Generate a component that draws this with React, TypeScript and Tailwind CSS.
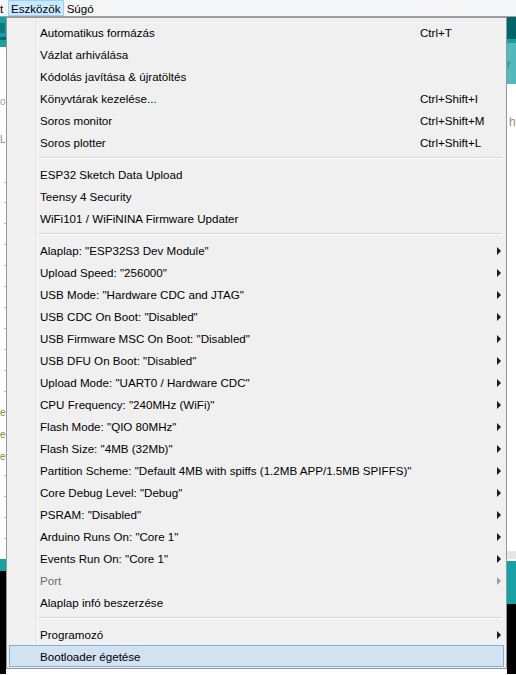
import React from 'react'

type Entry =
  | { kind: 'item'; label: string; shortcut?: string; sub?: boolean; disabled?: boolean; active?: boolean }
  | { kind: 'sep' }

const entries: Entry[] = [
  { kind: 'item', label: 'Automatikus formázás', shortcut: 'Ctrl+T' },
  { kind: 'item', label: 'Vázlat arhiválása' },
  { kind: 'item', label: 'Kódolás javítása & újratöltés' },
  { kind: 'item', label: 'Könyvtárak kezelése...', shortcut: 'Ctrl+Shift+I' },
  { kind: 'item', label: 'Soros monitor', shortcut: 'Ctrl+Shift+M' },
  { kind: 'item', label: 'Soros plotter', shortcut: 'Ctrl+Shift+L' },
  { kind: 'sep' },
  { kind: 'item', label: 'ESP32 Sketch Data Upload' },
  { kind: 'item', label: 'Teensy 4 Security' },
  { kind: 'item', label: 'WiFi101 / WiFiNINA Firmware Updater' },
  { kind: 'sep' },
  { kind: 'item', label: 'Alaplap: "ESP32S3 Dev Module"', sub: true },
  { kind: 'item', label: 'Upload Speed: "256000"', sub: true },
  { kind: 'item', label: 'USB Mode: "Hardware CDC and JTAG"', sub: true },
  { kind: 'item', label: 'USB CDC On Boot: "Disabled"', sub: true },
  { kind: 'item', label: 'USB Firmware MSC On Boot: "Disabled"', sub: true },
  { kind: 'item', label: 'USB DFU On Boot: "Disabled"', sub: true },
  { kind: 'item', label: 'Upload Mode: "UART0 / Hardware CDC"', sub: true },
  { kind: 'item', label: 'CPU Frequency: "240MHz (WiFi)"', sub: true },
  { kind: 'item', label: 'Flash Mode: "QIO 80MHz"', sub: true },
  { kind: 'item', label: 'Flash Size: "4MB (32Mb)"', sub: true },
  { kind: 'item', label: 'Partition Scheme: "Default 4MB with spiffs (1.2MB APP/1.5MB SPIFFS)"', sub: true },
  { kind: 'item', label: 'Core Debug Level: "Debug"', sub: true },
  { kind: 'item', label: 'PSRAM: "Disabled"', sub: true },
  { kind: 'item', label: 'Arduino Runs On: "Core 1"', sub: true },
  { kind: 'item', label: 'Events Run On: "Core 1"', sub: true },
  { kind: 'item', label: 'Port', sub: true, disabled: true },
  { kind: 'item', label: 'Alaplap infó beszerzése' },
  { kind: 'sep' },
  { kind: 'item', label: 'Programozó', sub: true },
  { kind: 'item', label: 'Bootloader égetése', active: true },
]

// editor line markers peeking out on the left of the menu
const ticks = [135, 155, 176, 197, 218, 239, 260, 281, 302, 323, 344, 365, 386, 407, 428, 449, 470, 491]

const Arrow = ({ disabled }: { disabled?: boolean }) => (
  <span
    className={
      'border-y-[4px] border-l-[4px] border-y-transparent ' +
      (disabled ? 'border-l-[#a0a0a0]' : 'border-l-[#1a1a1a]')
    }
  />
)

const MenuRow = ({ e }: { e: Extract<Entry, { kind: 'item' }> }) => (
  <div
    className={
      'relative mx-[2px] flex h-[22px] items-center border ' +
      (e.active ? 'border-[#84acdd] bg-[#d1e2f3]' : 'border-transparent')
    }
  >
    <span className={'ml-[30px] flex-1 whitespace-nowrap pt-[2px] ' + (e.disabled ? 'text-[#6d6d6d]' : 'text-black')}>
      {e.label}
    </span>
    {e.shortcut && <span className="absolute left-[410px] whitespace-nowrap pt-[2px] text-black">{e.shortcut}</span>}
    {e.sub && (
      <span className="mr-[2px] flex pt-[1px]">
        <Arrow disabled={e.disabled} />
      </span>
    )}
  </div>
)

const ToolsMenu = () => (
  <div className="absolute left-[6px] top-[17px] h-[652px] w-[501px] border border-[#979797] bg-[#f0f0f0] pt-[3px]">
    {/* icon gutter */}
    <div className="absolute bottom-0 left-[29px] top-0 w-[2px] border-l border-[#e2e3e3] bg-white" />
    <div className="relative flex flex-col">
      {entries.map((e, i) =>
        e.kind === 'sep' ? (
          <div key={i} className="flex h-[10px] items-center pl-[31px] pr-[4px]">
            <div className="h-[2px] w-full border-t border-[#d7d7d7] bg-white" />
          </div>
        ) : (
          <MenuRow key={i} e={e} />
        )
      )}
    </div>
  </div>
)

export default function App() {
  return (
    <div className="relative h-[675px] w-[516px] overflow-hidden bg-white font-['Liberation_Sans',Arial,sans-serif] text-[11.6px] leading-none">
      {/* menu bar */}
      <div className="flex h-[17px] items-stretch border-b border-[#a0a0a0] bg-[#f5f6f7] text-black">
        <span className="flex w-[8px] items-center pt-[2px]">t</span>
        <span className="flex items-center border border-[#99d1ff] bg-[#cce8ff] px-[2px] pt-[2px]">Eszközök</span>
        <span className="ml-[3px] flex items-center pt-[2px]">Súgó</span>
      </div>

      {/* window behind the menu */}
      <div className="flex h-[657px]">
        <div className="flex w-[6px] flex-col">
          <div className="flex h-[30px] flex-col bg-[#17a1a5]">
            <div className="mt-[6px] h-[10px] w-[5px] bg-[#0e7a7e]" />
            <div className="mt-[4px] h-[3px] w-[6px] bg-[#006468]" />
          </div>
          <div className="relative flex-1 overflow-hidden bg-white text-[10px]">
            <span className="absolute left-0 top-[50px] text-[#a0a0b0]">o</span>
            <span className="absolute left-0 top-[88px] text-[#8a7db8]">L</span>
            {ticks.map(t => (
              <span key={t} className="absolute left-[4px] h-px w-[2px] bg-[#e0b080]" style={{ top: t }} />
            ))}
            <span className="absolute left-0 top-[361px] bg-white text-[#7a8a1e]">e</span>
            <span className="absolute left-0 top-[383px] bg-white text-[#7a8a1e]">e</span>
            <span className="absolute left-0 top-[405px] bg-white text-[#7a8a1e]">e</span>
          </div>
          <div className="h-[12px] bg-[#17a1a5]" />
          <div className="h-[103px] bg-black" />
        </div>
        <div className="flex-1" />
        <div className="flex w-[9px] flex-col">
          <div className="h-[22px] bg-[#006468]" />
          <div className="h-[4px] bg-[#17a1a5]" />
          <div className="flex h-[41px] items-center bg-[#52b9bc] text-[#1a8d91]">r</div>
          <div className="relative flex-1 bg-white">
            <span className="absolute left-[2px] top-[32px] text-[12px] text-[#a08c6a]">h</span>
          </div>
          <div className="h-[8px] bg-[#e6e6e6]" />
          <div className="h-[2px] bg-white" />
          <div className="h-[43px] bg-[#17a1a5]" />
          <div className="h-[70px] bg-black" />
        </div>
      </div>

      <ToolsMenu />
    </div>
  )
}
